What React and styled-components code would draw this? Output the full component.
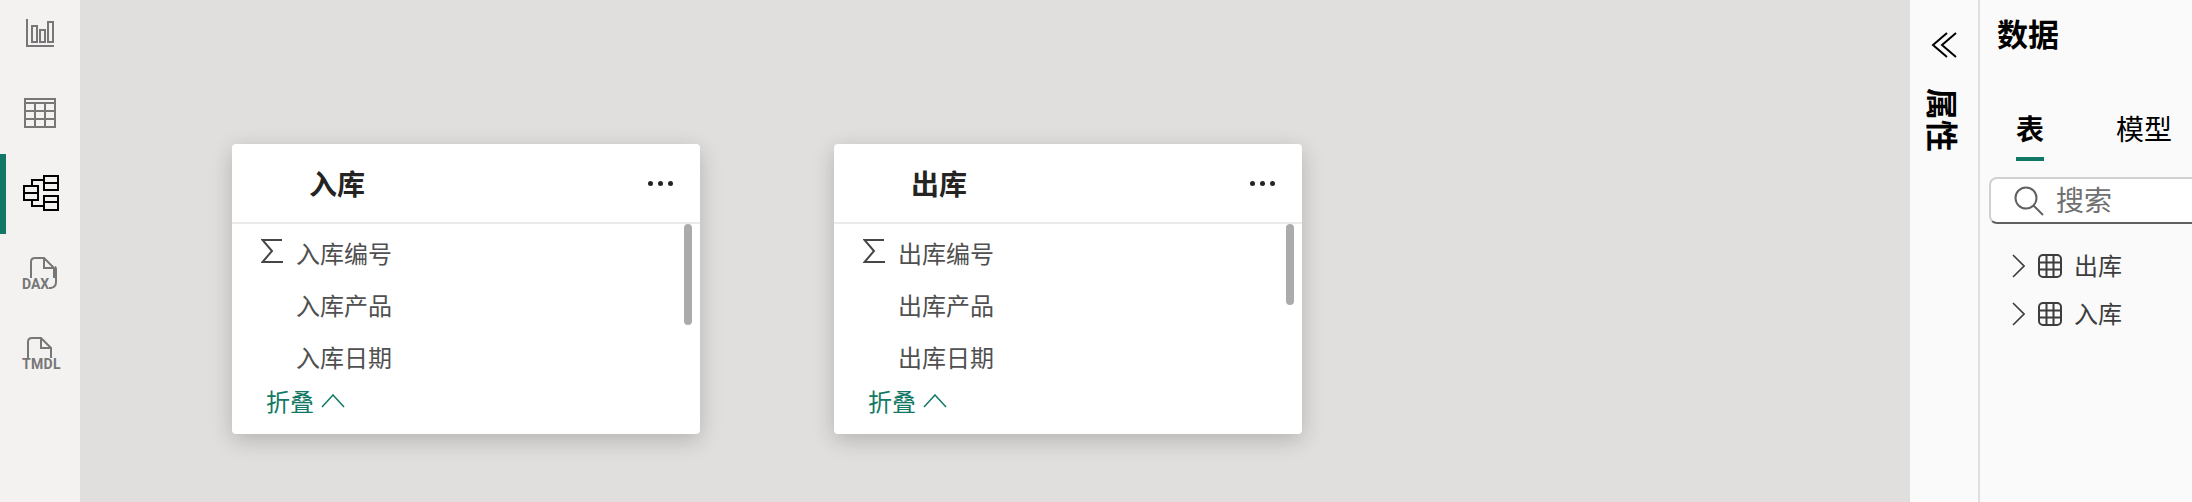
import React from 'react'
import styled, { createGlobalStyle } from 'styled-components'

const CJK = `"Noto Sans CJK SC", "Noto Sans", sans-serif`

const GlobalStyle = createGlobalStyle`
  html, body {
    margin: 0;
    padding: 0;
    height: 100%;
    overflow: hidden;
    font-family: ${CJK};
  }
`

const Page = styled.div`
  display: flex;
  width: 2192px;
  height: 502px;
  overflow: hidden;
  background: #e0dfdd;
`

const Rail = styled.nav`
  flex: 0 0 80px;
  height: 100%;
  overflow: hidden;
  background: #f3f2f1;
`

const RailList = styled.div`
  display: flex;
  flex-direction: column;
  margin-top: -6px;
`

const RailItem = styled.div`
  position: relative;
  display: flex;
  align-items: center;
  justify-content: center;
  box-sizing: border-box;
  height: 80px;
  padding-bottom: 3px;
  color: ${(p) => (p.$active ? '#000' : '#777')};

  &::before {
    content: '';
    display: ${(p) => (p.$active ? 'block' : 'none')};
    position: absolute;
    left: 0;
    top: 0;
    bottom: 0;
    width: 6px;
    background: #117865;
  }
`

const DocSvg = styled.svg`
  margin-top: 7px;
  overflow: visible;
`

const ModelSvg = styled.svg`
  margin-left: 2px;
`

const Canvas = styled.main`
  position: relative;
  flex: 1;
  height: 100%;
`

const Card = styled.section`
  position: absolute;
  left: ${(p) => p.$left}px;
  top: 144px;
  width: 468px;
  height: 290px;
  display: flex;
  flex-direction: column;
  background: #fff;
  border-radius: 4px;
  box-shadow: 0 6px 22px rgba(0, 0, 0, 0.2);
`

const CardHeader = styled.header`
  flex: 0 0 78px;
  display: flex;
  align-items: center;
  justify-content: space-between;
  padding: 0 27px 0 77px;
  border-bottom: 2px solid #edebe9;
`

const CardTitle = styled.h2`
  margin: 0;
  font-size: 28px;
  line-height: 1;
  font-weight: 700;
  color: #252423;
`

const Dots = styled.div`
  display: flex;
  gap: 5px;
`

const Dot = styled.i`
  width: 5px;
  height: 5px;
  border-radius: 50%;
  background: #252423;
`

const CardBody = styled.div`
  position: relative;
  flex: 1;
  display: flex;
  flex-direction: column;
  padding-top: 2px;
`

const FieldRow = styled.div`
  display: flex;
  align-items: center;
  height: 52px;
  padding-left: 29px;
  font-size: 24px;
  color: #505050;
`

const SigmaSlot = styled.span`
  display: flex;
  flex: 0 0 35px;
  height: 24px;
  margin-top: -3px;
  color: #484644;
`

const Collapse = styled.div`
  display: flex;
  align-items: center;
  gap: 7px;
  height: 37px;
  padding-left: 34px;
  font-size: 24px;
  color: #117865;
`

const ScrollThumb = styled.div`
  position: absolute;
  top: 0;
  right: 8px;
  width: 8px;
  height: ${(p) => p.$height}px;
  border-radius: 4px;
  background: #ababab;
`

const Props = styled.aside`
  flex: 0 0 70px;
  height: 100%;
  display: flex;
  flex-direction: column;
  align-items: center;
  background: #fafafa;
  border-right: 2px solid #e1dfdd;
  box-sizing: border-box;
  padding-top: 32px;
`

const PropsLabel = styled.div`
  margin-top: 30px;
  writing-mode: vertical-rl;
  text-orientation: sideways;
  font-size: 32px;
  line-height: 1;
  font-weight: 700;
  color: #000;
`

const DataPane = styled.aside`
  flex: 0 0 212px;
  height: 100%;
  overflow: hidden;
  background: #fafafa;
`

const PaneTitle = styled.h1`
  margin: 0;
  padding: 15px 0 0 17px;
  font-size: 31px;
  line-height: 36px;
  font-weight: 700;
  color: #000;
`

const Tabs = styled.div`
  display: flex;
  gap: 72px;
  margin-top: 57px;
  padding-left: 36px;
`

const Tab = styled.div`
  width: fit-content;
  height: 53px;
  padding-top: 4px;
  box-sizing: border-box;
  white-space: nowrap;
  font-size: 28px;
  line-height: 32px;
  font-weight: ${(p) => (p.$active ? 700 : 400)};
  color: #000;
  border-bottom: ${(p) => (p.$active ? '4px solid #117865' : '4px solid transparent')};
`

const SearchBox = styled.div`
  display: flex;
  align-items: center;
  gap: 12px;
  width: 260px;
  height: 47px;
  margin: 16px 0 0 9px;
  padding-left: 23px;
  box-sizing: border-box;
  background: #fff;
  border: 2px solid #d1d1d1;
  border-bottom-color: #616161;
  border-radius: 8px;
  font-size: 28px;
  color: #707070;
`

const SearchText = styled.span`
  margin-top: -3px;
`

const Tree = styled.div`
  display: flex;
  flex-direction: column;
  margin-top: 18px;
`

const TreeRow = styled.div`
  display: flex;
  align-items: center;
  height: 48px;
  padding-left: 32px;
  font-size: 24px;
  color: #3d3d3d;
`

const TreeLabel = styled.span`
  margin: -3px 0 0 12px;
`

const ChartIcon = () => (
  <svg width="28" height="28" viewBox="0 0 28 28" fill="none" stroke="currentColor" strokeWidth="2">
    <path d="M1 0v27h27" />
    <rect x="6" y="7" width="5" height="16" />
    <rect x="14" y="11" width="5" height="12" />
    <rect x="22" y="3" width="5" height="20" />
  </svg>
)

const TableIcon = () => (
  <svg width="32" height="30" viewBox="0 0 32 30" fill="none" stroke="currentColor" strokeWidth="2">
    <rect x="1" y="1" width="30" height="28" />
    <path d="M1 5h30M1 13h30M1 21h30M11 5v24M21 5v24" />
  </svg>
)

const ModelIcon = () => (
  <ModelSvg width="36" height="36" viewBox="0 0 36 36" fill="none" stroke="currentColor" strokeWidth="2">
    <rect x="1" y="11" width="14" height="14" />
    <path d="M1 18h14" />
    <rect x="21" y="1" width="14" height="14" />
    <path d="M21 8h14" />
    <rect x="21" y="21" width="14" height="14" />
    <path d="M21 27h14M9 11V5h12M9 25v6h12" />
  </ModelSvg>
)

const DaxIcon = () => (
  <DocSvg width="36" height="38" viewBox="0 0 36 38" fill="none" stroke="currentColor" strokeWidth="2">
    <path d="M9 21V5q0-4 4-4h9l10 10v10M22 1v10h10" />
    <path d="M33 10q1 0 1 3v12q0 5-5 6h-2" />
    <text x="0" y="32" fill="currentColor" stroke="none" fontFamily="Roboto, sans-serif" fontWeight="700" fontSize="14">DAX</text>
  </DocSvg>
)

const TmdlIcon = () => (
  <DocSvg width="40" height="38" viewBox="0 0 40 38" fill="none" stroke="currentColor" strokeWidth="2">
    <path d="M8 21V5q0-4 4-4h9l10 10v10M21 1v10h10" />
    <text x="2" y="32" fill="currentColor" stroke="none" fontFamily="Roboto, sans-serif" fontWeight="700" fontSize="14" letterSpacing="0.3">TMDL</text>
  </DocSvg>
)

const SigmaIcon = () => (
  <svg width="22" height="24" viewBox="0 0 22 24" fill="none" stroke="currentColor" strokeWidth="2">
    <path d="M21 1H1.5L11 12 1.5 23H22" />
  </svg>
)

const ChevronUp = () => (
  <svg width="24" height="14" viewBox="0 0 24 14" fill="none" stroke="currentColor" strokeWidth="1.5">
    <path d="M1 13L12 1l11 12" />
  </svg>
)

const ChevronRight = () => (
  <svg width="13" height="24" viewBox="0 0 13 24" fill="none" stroke="currentColor" strokeWidth="1.6">
    <path d="M1 1l11 11L1 23" />
  </svg>
)

const DoubleLeft = () => (
  <svg width="26" height="26" viewBox="0 0 26 26" fill="none" stroke="#000" strokeWidth="2">
    <path d="M16 1L2 13l14 12M25 1L11 13l14 12" />
  </svg>
)

const SearchIcon = () => (
  <svg width="30" height="30" viewBox="0 0 30 30" fill="none" stroke="#616161" strokeWidth="2">
    <circle cx="12" cy="12" r="10.5" />
    <path d="M19.5 19.5L29 29" />
  </svg>
)

const GridSvg = styled.svg`
  margin-left: 13px;
`

const GridIcon = () => (
  <GridSvg width="24" height="24" viewBox="0 0 24 24" fill="none" stroke="#3d3d3d" strokeWidth="2">
    <rect x="1" y="1" width="22" height="22" rx="4" />
    <path d="M1 8.5h22M1 15.5h22M8.5 1v22M15.5 1v22" />
  </GridSvg>
)

const TableCard = ({ name, left, thumb }) => (
  <Card $left={left}>
    <CardHeader>
      <CardTitle>{name}</CardTitle>
      <Dots><Dot /><Dot /><Dot /></Dots>
    </CardHeader>
    <CardBody>
      <ScrollThumb $height={thumb} />
      <FieldRow><SigmaSlot><SigmaIcon /></SigmaSlot>{name}编号</FieldRow>
      <FieldRow><SigmaSlot />{name}产品</FieldRow>
      <FieldRow><SigmaSlot />{name}日期</FieldRow>
      <Collapse>折叠<ChevronUp /></Collapse>
    </CardBody>
  </Card>
)

export default function App() {
  return (
    <Page>
      <GlobalStyle />
      <Rail>
        <RailList>
          <RailItem><ChartIcon /></RailItem>
          <RailItem><TableIcon /></RailItem>
          <RailItem $active><ModelIcon /></RailItem>
          <RailItem><DaxIcon /></RailItem>
          <RailItem><TmdlIcon /></RailItem>
        </RailList>
      </Rail>
      <Canvas>
        <TableCard name="入库" left={152} thumb={101} />
        <TableCard name="出库" left={754} thumb={81} />
      </Canvas>
      <Props>
        <DoubleLeft />
        <PropsLabel>属性</PropsLabel>
      </Props>
      <DataPane>
        <PaneTitle>数据</PaneTitle>
        <Tabs>
          <Tab $active>表</Tab>
          <Tab>模型</Tab>
        </Tabs>
        <SearchBox><SearchIcon /><SearchText>搜索</SearchText></SearchBox>
        <Tree>
          <TreeRow><ChevronRight /><GridIcon /><TreeLabel>出库</TreeLabel></TreeRow>
          <TreeRow><ChevronRight /><GridIcon /><TreeLabel>入库</TreeLabel></TreeRow>
        </Tree>
      </DataPane>
    </Page>
  )
}
